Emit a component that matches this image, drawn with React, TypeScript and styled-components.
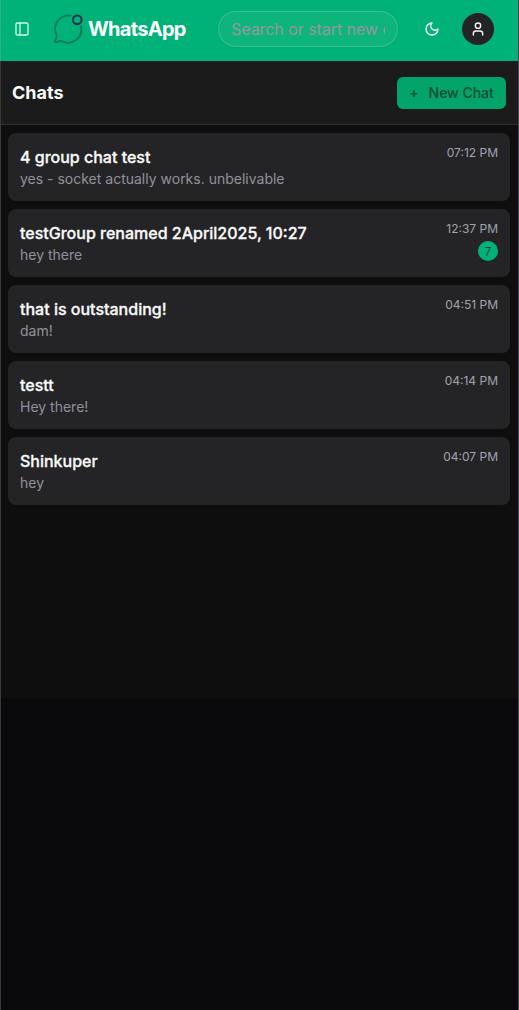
import React from "react";
import styled, { createGlobalStyle } from "styled-components";

const GlobalStyle = createGlobalStyle`
  *, *::before, *::after { box-sizing: border-box; }
  body { margin: 0; background: #09090b; font-family: Inter, "Liberation Sans", sans-serif; }
  button, input { font-family: inherit; }
`;

const Page = styled.div`
  display: flex;
  flex-direction: column;
  height: 1010px;
  background: #0a0a0c;
  border-left: 1px solid #3a3a3c;
  border-right: 1px solid #4a4652;
`;

const TopBar = styled.header`
  display: flex;
  align-items: center;
  flex: none;
  height: 61px;
  margin-left: -1px;
  padding: 0 24px 3px 7px;
  background: #00b277;
  border-left: 1px solid #2bb284;
`;

const IconButton = styled.button<{ $size: number }>`
  display: flex;
  align-items: center;
  justify-content: center;
  flex: none;
  width: ${(p) => p.$size}px;
  height: ${(p) => p.$size}px;
  padding: 0;
  border: 0;
  color: #fafafa;
  background: transparent;
`;

const Brand = styled.div`
  display: flex;
  align-items: center;
  flex: none;
  width: 165px;
  margin-left: 17px;
  gap: 5px;
`;

const BrandName = styled.span`
  font-size: 20px;
  font-weight: 700;
  line-height: 28px;
  letter-spacing: -0.7px;
  color: #fff;
`;

const SearchInput = styled.input`
  flex: none;
  width: 180px;
  height: 36px;
  padding: 4px 12px;
  border: 1px solid rgba(255, 255, 255, 0.17);
  border-radius: 18px;
  outline: 0;
  background: rgba(255, 255, 255, 0.05);
  box-shadow: 0 1px 2px rgba(0, 0, 0, 0.06);
  font-size: 16px;
  letter-spacing: -0.06px;
  color: #fff;
  &::placeholder { color: #98959f; opacity: 1; }
`;

const Actions = styled.div`
  display: flex;
  align-items: center;
  gap: 12px;
  margin-left: auto;
`;

const Avatar = styled.div`
  display: flex;
  align-items: center;
  justify-content: center;
  width: 32px;
  height: 32px;
  border-radius: 50%;
  background: #242426;
  color: #fafafa;
`;

const SectionHeader = styled.div`
  display: flex;
  align-items: center;
  justify-content: space-between;
  flex: none;
  height: 64px;
  padding: 0 12px 0 11px;
  background: #1b1b1b;
  border-bottom: 1px solid #303032;
`;

const SectionTitle = styled.h2`
  margin: 0;
  font-size: 18px;
  line-height: 28px;
  font-weight: 700;
  color: #fafafa;
`;

const NewChatButton = styled.button`
  display: flex;
  align-items: center;
  justify-content: center;
  gap: 10px;
  width: 109px;
  height: 32px;
  padding: 0;
  border: 0;
  border-radius: 6px;
  background: #03a469;
  color: #0b4c31;
  font-size: 14px;
  font-weight: 500;
  letter-spacing: -0.02px;
`;

const ChatList = styled.ul`
  display: flex;
  flex-direction: column;
  flex: none;
  gap: 8px;
  height: 573px;
  margin: 0;
  padding: 8px 8px 0 7px;
  list-style: none;
  background: #0e0e0e;
`;

const ChatCard = styled.li`
  display: flex;
  justify-content: space-between;
  height: 68px;
  padding: 12px;
  border-radius: 8px;
  background: #242426;
`;

const ChatName = styled.div`
  font-size: 16px;
  line-height: 24px;
  font-weight: 500;
  -webkit-text-stroke: 0.3px #fafafa;
  color: #fafafa;
`;

const ChatPreview = styled.div`
  font-size: 14px;
  line-height: 20px;
  color: #92919b;
`;

const ChatMeta = styled.div`
  display: flex;
  flex-direction: column;
  align-items: flex-end;
  gap: 4px;
`;

const ChatTime = styled.time`
  font-size: 12px;
  line-height: 16px;
  color: #a3a2ac;
`;

const UnreadBadge = styled.span`
  display: flex;
  align-items: center;
  justify-content: center;
  width: 20px;
  height: 20px;
  border-radius: 50%;
  background: #00b277;
  color: #14482f;
  font-size: 12px;
`;

const PanelIcon = () => (
  <svg width="16" height="16" viewBox="0 0 24 24" fill="none" stroke="#d2f3e7" strokeWidth="2" strokeLinecap="round" strokeLinejoin="round">
    <rect x="3" y="3" width="18" height="18" rx="2" />
    <path d="M9 3v18" />
  </svg>
);

const BrandIcon = () => (
  <svg width="30" height="30" viewBox="0 0 30 30" fill="none" strokeLinecap="round" strokeLinejoin="round">
    <path
      d="M17.5 1.8A13.3 13.3 0 0 0 3.4 20.7C4.3 22.4 3.1 24.7 2.2 26.1C1.4 27.6 2.3 28.4 3.7 28C5.6 27.6 7.4 26.5 9 27.2A13.3 13.3 0 0 0 28 12.3"
      stroke="#0d785b"
      strokeWidth="1.9"
    />
    <circle cx="24.2" cy="5.8" r="4.3" stroke="#143451" strokeWidth="2.1" />
  </svg>
);

const MoonIcon = () => (
  <svg width="16" height="16" viewBox="0 0 24 24" fill="none" stroke="currentColor" strokeWidth="2" strokeLinecap="round" strokeLinejoin="round">
    <path d="M12 3a6 6 0 0 0 9 9 9 9 0 1 1-9-9Z" />
  </svg>
);

const UserIcon = () => (
  <svg width="16" height="16" viewBox="0 0 24 24" fill="none" stroke="currentColor" strokeWidth="2" strokeLinecap="round" strokeLinejoin="round">
    <circle cx="12" cy="7" r="4" />
    <path d="M19 21v-2a4 4 0 0 0-4-4H9a4 4 0 0 0-4 4v2" />
  </svg>
);

interface Chat {
  name: string;
  preview: string;
  time: string;
  unread?: number;
}

const chats: Chat[] = [
  { name: "4 group chat test", preview: "yes - socket actually works. unbelivable", time: "07:12 PM" },
  { name: "testGroup renamed 2April2025, 10:27", preview: "hey there", time: "12:37 PM", unread: 7 },
  { name: "that is outstanding!", preview: "dam!", time: "04:51 PM" },
  { name: "testt", preview: "Hey there!", time: "04:14 PM" },
  { name: "Shinkuper", preview: "hey", time: "04:07 PM" },
];

export default function App() {
  return (
    <>
      <GlobalStyle />
      <Page>
        <TopBar>
          <IconButton $size={28} aria-label="Toggle sidebar">
            <PanelIcon />
          </IconButton>
          <Brand>
            <BrandIcon />
            <BrandName>WhatsApp</BrandName>
          </Brand>
          <SearchInput placeholder="Search or start new chat" />
          <Actions>
            <IconButton $size={36} aria-label="Toggle theme">
              <MoonIcon />
            </IconButton>
            <Avatar>
              <UserIcon />
            </Avatar>
          </Actions>
        </TopBar>
        <SectionHeader>
          <SectionTitle>Chats</SectionTitle>
          <NewChatButton>
            <span>+</span>
            <span>New Chat</span>
          </NewChatButton>
        </SectionHeader>
        <ChatList>
          {chats.map((chat) => (
            <ChatCard key={chat.name}>
              <div>
                <ChatName>{chat.name}</ChatName>
                <ChatPreview>{chat.preview}</ChatPreview>
              </div>
              <ChatMeta>
                <ChatTime>{chat.time}</ChatTime>
                {chat.unread && <UnreadBadge>{chat.unread}</UnreadBadge>}
              </ChatMeta>
            </ChatCard>
          ))}
        </ChatList>
      </Page>
    </>
  );
}
